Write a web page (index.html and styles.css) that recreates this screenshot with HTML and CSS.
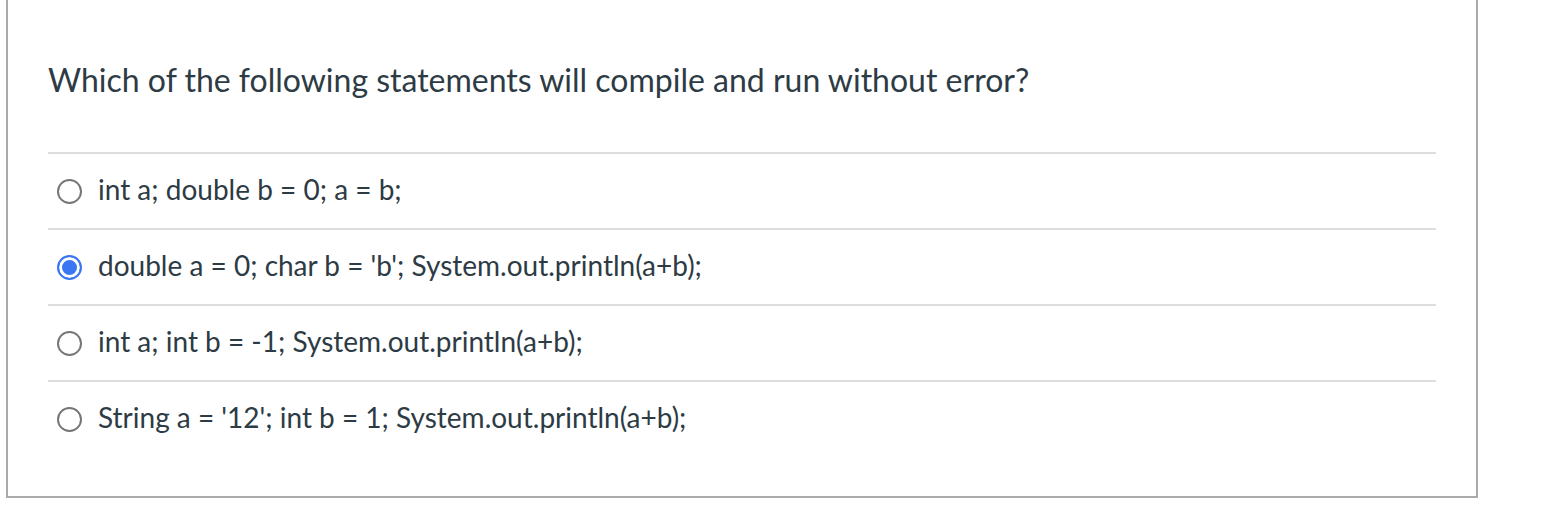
FILE: index.html
```html
<!DOCTYPE html>
<html>
<head>
<meta charset="utf-8">
<link rel="stylesheet" href="styles.css">
</head>
<body>
<div class="box">
  <div class="question">Which of the following statements will compile and run without error?</div>
  <div class="answers">
    <label class="answer"><span class="radio"></span><span class="text">int a; double b = 0; a = b;</span></label>
    <label class="answer"><span class="radio checked"></span><span class="text">double a = 0; char b = 'b'; System.out.println(a+b);</span></label>
    <label class="answer"><span class="radio"></span><span class="text">int a; int b = -1; System.out.println(a+b);</span></label>
    <label class="answer"><span class="radio"></span><span class="text">String a = '12'; int b = 1; System.out.println(a+b);</span></label>
  </div>
</div>
</body>
</html>
```
FILE: styles.css
```css
html, body {
  margin: 0;
  padding: 0;
  background: #fff;
}
body {
  padding-left: 6px;
  font-family: Lato, "Liberation Sans", sans-serif;
  color: #2d3b45;
}
.box {
  width: 1388px;
  border: 2px solid #aaaaaa;
  border-top: none;
  padding: 0 40px 40px 40px;
}
.question {
  font-size: 32px;
  line-height: 40px;
  padding: 60px 0 52px 0;
}
.answer {
  display: flex;
  align-items: center;
  height: 74px;
  border-top: 2px solid #dddddd;
  gap: 16px;
}
.radio {
  box-sizing: border-box;
  width: 25px;
  height: 25px;
  margin-left: 9px;
  border-radius: 50%;
  border: 2px solid #767676;
  background: #fff;
  flex: none;
}
.radio.checked {
  border: 2px solid #3a76f2;
  box-shadow: inset 0 0 0 3px #fff;
  background: #3a76f2;
}
.text {
  font-size: 28px;
  line-height: 34px;
  padding-bottom: 5px;
}
```
